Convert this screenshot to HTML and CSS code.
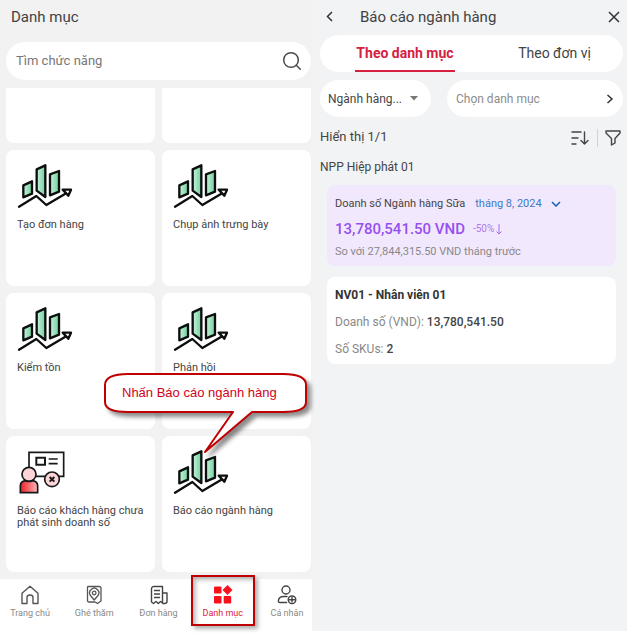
FILE: index.html
```html
<!DOCTYPE html>
<html lang="vi">
<head>
<meta charset="utf-8">
<meta name="viewport" content="width=device-width, initial-scale=1">
<title>Báo cáo ngành hàng</title>
<link rel="stylesheet" href="styles.css">
</head>
<body>
<svg class="defs" aria-hidden="true">
  <defs>
    <linearGradient id="mint" x1="0" y1="0" x2="1" y2="0">
      <stop offset="0" stop-color="#c9f3dc"/><stop offset="1" stop-color="#6fcf9e"/>
    </linearGradient>
    <linearGradient id="coral" x1="0" y1="0" x2="1" y2="0">
      <stop offset="0" stop-color="#ee1c25"/><stop offset="1" stop-color="#fbb9bb"/>
    </linearGradient>
    <symbol id="chart" viewBox="51 54 168 138">
      <g stroke="#0c0f0e" stroke-width="7" stroke-linejoin="round" stroke-linecap="round" fill="url(#mint)">
        <path d="M70 121 96 109V146L70 157Z"/>
        <path d="M110 73 136 61V156L110 137Z"/>
        <path d="M150 88 177 78V140L150 151Z"/>
        <path fill="none" d="M57 185 109 153 139 180 196 146"/>
        <path fill="#fff" d="M188 134H213L205 152Z"/>
      </g>
    </symbol>
  </defs>
</svg>
<main class="board">
  <section class="screen screen-menu">
    <h1 class="title">Danh mục</h1>
    <form class="search" role="search">
      <input class="search-input" type="search" placeholder="Tìm chức năng" aria-label="Tìm chức năng">
      <button class="icon-button" type="button" aria-label="Tìm">
        <svg width="20" height="20" viewBox="0 0 20 20" fill="none" stroke="#4a4a4a" stroke-width="1.5" stroke-linecap="round"><circle cx="9" cy="9" r="7.3"/><path d="M14.3 14.3 18.3 18.3"/></svg>
      </button>
    </form>
    <div class="tiles">
      <div class="tile tile-cut"></div>
      <div class="tile tile-cut"></div>
      <a class="tile" href="#"><svg class="tile-icon"><use href="#chart"/></svg><span>Tạo đơn hàng</span></a>
      <a class="tile" href="#"><svg class="tile-icon"><use href="#chart"/></svg><span>Chụp ảnh trưng bày</span></a>
      <a class="tile" href="#"><svg class="tile-icon"><use href="#chart"/></svg><span>Kiểm tồn</span></a>
      <a class="tile" href="#"><svg class="tile-icon"><use href="#chart"/></svg><span>Phản hồi</span></a>
      <a class="tile" href="#">
        <svg class="tile-icon" viewBox="51 57 168 138" fill="none" stroke="#16181a" stroke-width="5">
          <path fill="#fff" d="M87 67H191V139H87Z"/>
          <path stroke-width="6" d="M109 83H135V104H109Z"/>
          <path d="M146 87H173M146 101H173"/>
          <circle cx="87" cy="133" r="21" fill="#fdd5d8"/>
          <path fill="url(#coral)" d="M61 188V168Q61 154 76 152Q87 157 98 152Q113 154 113 168V188Z"/>
          <circle cx="156" cy="148" r="22" fill="#fdd5d8"/>
          <path stroke-width="6" d="M149 141 163 155M163 141 149 155"/>
        </svg>
        <span>Báo cáo khách hàng chưa phát sinh doanh số</span>
      </a>
      <div class="tile-holder">
        <a class="tile" href="#"><svg class="tile-icon"><use href="#chart"/></svg><span>Báo cáo ngành hàng</span></a>
        <div class="callout">
          <svg class="callout-shape" width="212" height="90" viewBox="0 0 212 90" aria-hidden="true">
            <path d="M25 2H180Q203 2 203 13V30Q203 40 180 40H149L102 80 130 40H25Q2 40 2 30V13Q2 2 25 2Z" fill="#fff" stroke="#c00000" stroke-width="2" stroke-linejoin="round"/>
          </svg>
          <p class="callout-text">Nhấn Báo cáo ngành hàng</p>
        </div>
      </div>
    </div>
    <nav class="tabbar">
      <a class="tab" href="#">
        <svg width="20" height="20" viewBox="0 0 20 20" fill="none" stroke="#555" stroke-width="1.4" stroke-linejoin="round"><path d="M2 8.2 10 1.2 18 8.2V18.5H13V12.2Q13 10 10 10T7 12.2V18.5H2Z"/></svg>
        <span>Trang chủ</span></a>
      <a class="tab" href="#">
        <svg width="20" height="20" viewBox="0 0 20 20" fill="none" stroke="#555" stroke-width="1.3" stroke-linejoin="round"><path d="M4 1.5H15Q17 1.5 17 3.5V16L13.5 18.5 11 17H5Q3.5 17 3.5 15.5V2Z"/><path d="M10.2 15 6.5 10.5A4.6 4.6 0 1 1 14 10.5Z"/><circle cx="10.2" cy="8" r="1.8"/></svg>
        <span>Ghé thăm</span></a>
      <a class="tab" href="#">
        <svg width="20" height="20" viewBox="0 0 20 20" fill="none" stroke="#444" stroke-width="1.4" stroke-linejoin="round"><path d="M5 1.5H13.5V18L11.5 16.5 9.3 18.5 7 16.5 4.5 18.5 2.5 17V4Q2.5 1.5 5 1.5ZM13.5 8H18V16.5Q18 18.5 15.5 18.5H13.5"/><path d="M5 5.500H11M5 9H11M5 12.500H11"/></svg>
        <span>Đơn hàng</span></a>
      <a class="tab tab-active" href="#" aria-current="page">
        <svg width="20" height="20" viewBox="0 0 20 20" fill="#f5121d"><rect x="1" y="1.5" width="7.5" height="7" rx="1"/><rect x="1" y="11" width="7.5" height="7.5" rx="1"/><rect x="10.7" y="11" width="7.5" height="7.5" rx="1"/><path d="M14.500 0 19.500 5 14.500 10 9.500 5Z"/></svg>
        <span>Danh mục</span></a>
      <a class="tab" href="#">
        <svg width="20" height="20" viewBox="0 0 20 20" fill="none" stroke="#444" stroke-width="1.4" stroke-linecap="round"><circle cx="9" cy="5" r="4"/><path d="M9.5 17.5H3Q1.2 17.5 1.4 15.5Q2 11.5 6.5 11.5H10"/><circle cx="15" cy="14.8" r="3.8"/><path d="M12.500 14.800H17.500M15 12.500V17"/></svg>
        <span>Cá nhân</span></a>
    </nav>
  </section>

  <section class="screen screen-report">
    <header class="report-head">
      <button class="icon-button" type="button" aria-label="Quay lại"><svg width="20" height="16" viewBox="0 0 20 16" fill="none" stroke="#333" stroke-width="1.5"><path d="M12 3 7.5 7.5 12 12"/></svg></button>
      <h2 class="title">Báo cáo ngành hàng</h2>
      <button class="icon-button" type="button" aria-label="Đóng"><svg width="12" height="12" viewBox="0 0 12 12" stroke="#333" stroke-width="1.5"><path d="M1 1 11 11M11 1 1 11"/></svg></button>
    </header>
    <div class="segments" role="tablist">
      <button class="segment segment-on" type="button" role="tab" aria-selected="true">Theo danh mục</button>
      <button class="segment" type="button" role="tab" aria-selected="false">Theo đơn vị</button>
    </div>
    <div class="filters">
      <button class="pill pill-kind" type="button">Ngành hàng...<svg width="8" height="5" viewBox="0 0 8 5" fill="#777"><path d="M0 0H8L4 4.5Z"/></svg></button>
      <button class="pill pill-pick" type="button">Chọn danh mục<svg width="8" height="10" viewBox="0 0 8 10" fill="none" stroke="#333" stroke-width="1.5"><path d="M1.5 1 6 5 1.5 9"/></svg></button>
    </div>
    <div class="summary">
      <span>Hiển thị 1/1</span>
      <div class="tools">
        <button class="icon-button" type="button" aria-label="Sắp xếp"><svg width="20" height="16" viewBox="0 0 20 16" fill="none" stroke="#444" stroke-width="1.4" stroke-linecap="round" stroke-linejoin="round"><path d="M2 2H11M2 8H8M2 14H6M14.5 2V14M11 10.5 14.5 14 18 10.5"/></svg></button>
        <span class="rule"></span>
        <button class="icon-button" type="button" aria-label="Lọc"><svg width="16" height="16" viewBox="0 0 16 16" fill="none" stroke="#444" stroke-width="1.4" stroke-linejoin="round"><path d="M1 1H15V3L10 8.5V13L6.5 15V8.500L1 3Z"/></svg></button>
      </div>
    </div>
    <p class="branch">NPP Hiệp phát 01</p>
    <article class="card card-total">
      <div class="total-head"><span>Doanh số Ngành hàng Sữa</span><button class="month" type="button">tháng 8, 2024<svg width="10" height="6" viewBox="0 0 10 6" fill="none" stroke="#1c64b4" stroke-width="1.6"><path d="M1 1 5 5 9 1"/></svg></button></div>
      <div class="total-value"><strong>13,780,541.50 VND</strong><span class="change">-50%<svg width="6" height="11" viewBox="0 0 6 11" fill="none" stroke="#a56cf0"><path d="M3 0V10M.5 7.5 3 10 5.5 7.5"/></svg></span></div>
      <p class="total-note">So với 27,844,315.50 VND tháng trước</p>
    </article>
    <article class="card card-staff">
      <h3 class="staff-name">NV01 - Nhân viên 01</h3>
      <p class="staff-line">Doanh số (VND): <b>13,780,541.50</b></p>
      <p class="staff-line">Số SKUs: <b>2</b></p>
    </article>
  </section>
</main>
</body>
</html>
```
FILE: styles.css
```css
* { box-sizing: border-box; }
body { margin: 0; background: #fff; color: #444; font-family: Roboto, "Liberation Sans", sans-serif; }
h1, h2, h3, p { margin: 0; font-weight: 400; }
a { color: inherit; text-decoration: none; }
button { border: 0; margin: 0; padding: 0; background: none; color: inherit; font: inherit; }
svg { display: block; flex: none; }
.defs { position: absolute; width: 0; height: 0; }

.board { display: grid; grid-template-columns: 312fr 315fr; min-height: 100vh; }
.screen { display: flex; flex-direction: column; min-width: 0; background: #f2f2f2; }
.title { font-size: 15px; line-height: 18px; color: #424242; }
.icon-button { display: flex; align-items: center; justify-content: center; }

.screen-menu .title { padding: 8px 11px 16px; }
.search { display: flex; align-items: center; height: 38px; margin: 0 1px 8px 6px; padding: 0 9px 0 10px; border-radius: 19px; background: #fff; }
.search-input { flex: 1; min-width: 0; padding: 0; border: 0; outline: 0; background: none; font: 13px/16px Roboto, sans-serif; color: #555; }
.search-input::placeholder { color: #777; opacity: 1; }

.tiles { display: grid; grid-template-columns: 1fr 1fr; gap: 7px; margin: 0 1px 7px 6px; }
.tile { display: flex; flex-direction: column; gap: 10px; height: 136px; padding: 13px 11px; border-radius: 8px; background: #fff; font-size: 11px; line-height: 12px; }
.tile-cut { height: 55px; border-radius: 0 0 8px 8px; }
.tile-icon { width: 56px; height: 46px; }
.tile-holder { position: relative; }

.callout { position: absolute; left: -59px; top: -64px; pointer-events: none; }
.callout-shape { filter: drop-shadow(4px 4px 2px rgba(0, 0, 0, .45)); }
.callout-text { position: absolute; left: 19px; top: 13px; white-space: nowrap; font: 13px/16px "Liberation Sans", sans-serif; color: #d0021b; }

.tabbar { display: flex; flex: 1; justify-content: space-between; align-items: flex-start; padding: 6px 3px 0 8px; background: #fff; }
.tab { position: relative; display: flex; flex-direction: column; align-items: center; gap: 2px; width: 44px; font-size: 9px; line-height: 12px; white-space: nowrap; color: #888; }
.tab-active { color: #e0203c; }
.tab-active::after { content: ""; position: absolute; inset: -10px -10px -7px; border: 2px solid #c00000; box-shadow: 3px 3px 4px rgba(0, 0, 0, .3), inset 3px 3px 4px rgba(0, 0, 0, .25); }

.screen-report { margin-bottom: 7px; padding: 0 4px 0 8px; background: #f2f3f5; }
.report-head { display: flex; align-items: center; height: 35px; padding: 0 3px 2px 0; }
.report-head .title { flex: 1; padding-left: 20px; }
.segments { display: grid; grid-template-columns: 170fr 129fr; justify-items: center; height: 37px; padding-right: 4px; border-radius: 19px; background: #fff; }
.segment { padding: 0 1px; border-bottom: 2px solid transparent; font-size: 14px; }
.segment-on { border-color: #d5213f; color: #d5213f; font-weight: 700; }
.filters { display: grid; grid-template-columns: 111fr 176fr; gap: 16px; margin-top: 8px; }
.pill { display: flex; align-items: center; justify-content: space-between; height: 37px; border-radius: 19px; background: #fff; font-size: 12px; }
.pill-kind { padding: 0 13px 0 8px; }
.pill-pick { padding: 0 9px; color: #8c8c8c; }
.summary { display: flex; align-items: center; justify-content: space-between; height: 28px; margin-top: 6px; font-size: 13px; line-height: 16px; }
.tools { display: flex; align-items: center; gap: 7px; padding: 2px 2px 0 0; }
.rule { width: 1px; height: 18px; background: #d2d2d2; }
.branch { margin-top: 8px; font-size: 12px; line-height: 16px; }
.card { margin: 0 7px; padding: 0 8px; border-radius: 8px; }
.card-total { margin-top: 10px; padding-top: 11px; padding-bottom: 6px; background: #f2e8fd; }
.total-head { display: flex; align-items: center; gap: 10px; font-size: 11px; line-height: 16px; }
.month { display: flex; align-items: center; gap: 9px; color: #3c7cc4; }
.total-value { display: flex; align-items: center; gap: 8px; margin-top: 7px; font-size: 15px; line-height: 20px; color: #9650f0; }
.total-value strong { font-weight: 500; }
.change { display: flex; align-items: center; gap: 2px; font-size: 10px; color: #b07be8; }
.total-note { margin-top: 5px; font-size: 11px; line-height: 16px; color: #888; }
.card-staff { margin-top: 11px; padding-top: 10px; padding-bottom: 7px; background: #fff; }
.staff-name { font-size: 12px; line-height: 16px; font-weight: 700; color: #333; }
.staff-line { margin-top: 11px; font-size: 12px; line-height: 16px; color: #888; }
.staff-line b { font-weight: 500; color: #444; }
```
